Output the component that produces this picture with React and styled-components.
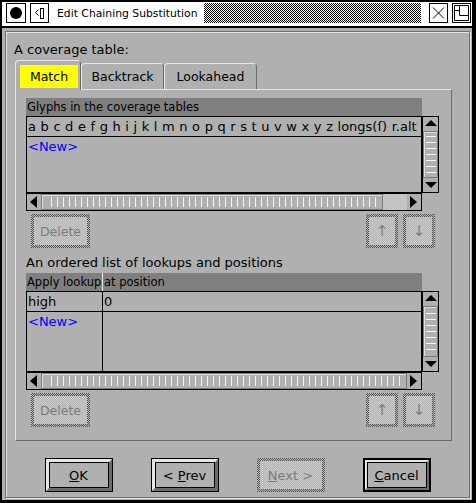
import React from 'react';
import styled, { createGlobalStyle, css } from 'styled-components';

const GRAY = '#b0b0b0';

const GlobalStyle = createGlobalStyle`
  html, body {
    margin: 0;
    padding: 0;
    background: ${GRAY};
  }
  body {
    font-family: "DejaVu Sans", sans-serif;
    font-size: 13px;
    color: #000;
  }
  * {
    box-sizing: border-box;
  }
`;

const stipple = (a, b) => css`
  background: repeating-conic-gradient(${a} 0 25%, ${b} 0 50%) 0 0 / 2px 2px;
`;

const Window = styled.div`
  width: 476px;
  height: 503px;
  display: flex;
  flex-direction: column;
  background: ${GRAY};
  border-style: solid;
  border-color: #000;
  border-width: 2px 4px 3px 2px;
`;

const TitleBar = styled.div`
  height: 26px;
  flex: none;
  display: flex;
  align-items: center;
  padding: 0 1px 2px 2px;
  background: #fff;
  border-bottom: 2px solid #000;
`;

const TitleButton = styled.div`
  width: ${(p) => p.$w || 20}px;
  height: 20px;
  flex: none;
  border: 1px solid #000;
  display: flex;
  align-items: center;
  justify-content: center;
  margin-left: ${(p) => p.$gap || 0}px;
`;

const TitleText = styled.div`
  margin-left: 8px;
  font-size: 10.8px;
  white-space: nowrap;
`;

const Checker = styled.div`
  flex: 1;
  height: 20px;
  margin: 0 8px 0 7px;
  ${stipple('#000', '#fff')}
`;

const Body = styled.div`
  flex: 1;
  display: flex;
  padding: 3px 2px 2px 3px;
`;

const Frame = styled.div`
  flex: 1;
  display: flex;
  flex-direction: column;
  padding: 10px 8px 0 8px;
  border: 1px solid #6e6e6e;
  box-shadow: inset 1px 1px 0 #e4e4e4, 1px 1px 0 #e4e4e4;
`;

const Label = styled.div`
  line-height: 15px;
  white-space: nowrap;
`;

const TabStrip = styled.div`
  display: flex;
  align-items: flex-end;
  margin: 3px 0 0 1px;
  height: 29px;
  font-size: 12.5px;
`;

const Tab = styled.div`
  position: relative;
  height: ${(p) => (p.$active ? 30 : 26)}px;
  margin-bottom: ${(p) => (p.$active ? -1 : 0)}px;
  width: ${(p) => p.$w}px;
  padding: ${(p) => (p.$active ? '4px 2px 2px 4px' : '0')};
  border-top: 1px solid #e8e8e8;
  border-left: 1px solid #e8e8e8;
  border-right: 1px solid #6a6a6a;
  border-radius: 4px 4px 0 0;
  background: ${GRAY};
  z-index: ${(p) => (p.$active ? 1 : 0)};
  display: flex;
  align-items: center;
  justify-content: center;
`;

const TabFace = styled.div`
  flex: 1;
  align-self: stretch;
  display: flex;
  align-items: center;
  justify-content: center;
  background: ${(p) => (p.$active ? '#ffff00' : 'transparent')};
`;

const Panel = styled.div`
  width: 437px;
  margin-left: 1px;
  padding: 8px 12px 13px 10px;
  border-style: solid;
  border-width: 1px;
  border-color: #e8e8e8 #6a6a6a #6a6a6a #e8e8e8;
  display: flex;
  flex-direction: column;
`;

const List = styled.div`
  display: grid;
  grid-template-columns: 396px 17px;
  grid-template-rows: 18px ${(p) => p.$body}px 18px;
`;

const Header = styled.div`
  grid-column: 1;
  grid-row: 1;
  background: #7f7f7f;
  display: flex;
  align-items: center;
  font-size: 11.5px;
`;

const HeadCell = styled.div`
  width: ${(p) => (p.$w ? `${p.$w}px` : 'auto')};
  flex: ${(p) => (p.$w ? 'none' : 1)};
  align-self: stretch;
  display: flex;
  align-items: center;
  padding-left: 1px;
  white-space: nowrap;
  overflow: hidden;
  border-right: ${(p) => (p.$w ? '1px solid #e8e8e8' : 'none')};
`;

const ListBody = styled.div`
  grid-column: 1;
  grid-row: 2;
  border: 1px solid #000;
  overflow: hidden;
  display: grid;
  grid-template-columns: ${(p) => p.$cols || '1fr'};
  grid-template-rows: 20px 1fr;
`;

const Cell = styled.div`
  padding: 1px 0 0 1px;
  white-space: nowrap;
  color: ${(p) => (p.$new ? '#0000ff' : '#000')};
  border-bottom: ${(p) => (p.$top ? '1px solid #000' : 'none')};
  border-right: ${(p) => (p.$sep ? '1px solid #000' : 'none')};
  line-height: 17px;
  word-spacing: ${(p) => p.$ws || 0}px;
`;

const VScroll = styled.div`
  grid-column: 2;
  grid-row: 2;
  border: 1px solid #000;
  display: flex;
  flex-direction: column;
`;

const HScroll = styled.div`
  grid-column: 1;
  grid-row: 3;
  border: 1px solid #000;
  display: flex;
`;

const ArrowBtn = styled.div`
  flex: none;
  ${(p) => (p.$vertical ? 'height: 14px;' : 'width: 14px;')}
  display: flex;
  align-items: center;
  justify-content: center;
  background: ${GRAY};
`;

const VThumb = styled.div`
  flex: 1;
  border: 1px solid #7a7a7a;
  box-shadow: inset 1px 1px 0 #e0e0e0;
  display: flex;
  align-items: center;
  justify-content: center;
`;

const VGrip = styled.div`
  width: 10px;
  height: 37px;
  background: repeating-linear-gradient(to bottom, #f4f4f4 0 1px, transparent 1px 6px);
`;

const HThumb = styled.div`
  flex: 1;
  border: 1px solid #7a7a7a;
  box-shadow: inset 1px 1px 0 #e0e0e0;
  padding: 2px 4px 2px 4px;
  background-clip: content-box;
  background-origin: content-box;
  background-image: repeating-linear-gradient(to right, transparent 0 5px, #f4f4f4 5px 6px);
`;

const Trough = styled.div`
  flex: none;
  background: #c4c4c4;
`;

const ButtonRow = styled.div`
  display: flex;
  align-items: center;
  margin-top: 3px;
  padding: 0 4px 0 5px;
  gap: 5px;
`;

const Spacer = styled.div`
  flex: 1;
`;

const DisabledButton = styled.div`
  width: ${(p) => p.$w}px;
  height: 34px;
  padding: 3px;
  ${stipple('#505050', '#bcbcbc')}
  display: flex;
`;

const DisabledFace = styled.div`
  flex: 1;
  display: flex;
  align-items: center;
  justify-content: center;
  ${stipple('#c8c8c8', '#b6b6b6')}
  color: #7c7c7c;
  font-size: ${(p) => p.$size || 12.5}px;
  white-space: nowrap;
`;

const Section = styled.div`
  margin-top: ${(p) => p.$mt || 0}px;
`;

const Footer = styled.div`
  display: flex;
  justify-content: center;
  gap: 38px;
  margin-top: 17px;
`;

const PushButton = styled.div`
  width: 68px;
  height: 34px;
  border: ${(p) => (p.$default ? 2 : 1)}px solid #000;
  display: flex;
`;

const Bevel = styled.div`
  flex: 1;
  display: flex;
  border-style: solid;
  border-width: ${(p) => (p.$default ? 2 : 3)}px;
  border-color: #e6e6e6 #6c6c6c #6c6c6c #e6e6e6;
`;

const Face = styled.div`
  flex: 1;
  border: 1px solid #000;
  display: flex;
  align-items: center;
  justify-content: center;
  white-space: nowrap;
`;

const Tri = ({ dir }) => {
  const pts = {
    up: '1,9 7,3 13,9',
    down: '1,4 7,10 13,4',
    left: '10,1 3,7 10,13',
    right: '3,1 10,7 3,13',
  }[dir];
  return (
    <svg width="14" height="14" viewBox="0 0 14 14">
      <polygon points={pts} fill="#000" />
    </svg>
  );
};

const ScrollV = () => (
  <VScroll>
    <ArrowBtn $vertical>
      <Tri dir="up" />
    </ArrowBtn>
    <VThumb>
      <VGrip />
    </VThumb>
    <ArrowBtn $vertical>
      <Tri dir="down" />
    </ArrowBtn>
  </VScroll>
);

const ScrollH = ({ trough }) => (
  <HScroll>
    <ArrowBtn>
      <Tri dir="left" />
    </ArrowBtn>
    <HThumb />
    {trough ? <Trough style={{ width: trough }} /> : null}
    <ArrowBtn>
      <Tri dir="right" />
    </ArrowBtn>
  </HScroll>
);

const EditRow = () => (
  <ButtonRow>
    <DisabledButton $w={59}>
      <DisabledFace>Delete</DisabledFace>
    </DisabledButton>
    <Spacer />
    <DisabledButton $w={32}>
      <DisabledFace $size={15}>↑</DisabledFace>
    </DisabledButton>
    <DisabledButton $w={32}>
      <DisabledFace $size={15}>↓</DisabledFace>
    </DisabledButton>
  </ButtonRow>
);

const glyphs = 'a b c d e f g h i j k l m n o p q r s t u v w x y z longs(ſ) r.alt';

export default function App() {
  return (
    <>
      <GlobalStyle />
      <Window>
        <TitleBar>
          <TitleButton $gap={2}>
            <svg width="14" height="14" viewBox="0 0 14 14">
              <circle cx="7" cy="7" r="6" fill="#000" />
            </svg>
          </TitleButton>
          <TitleButton $w={19} $gap={4}>
            <svg width="17" height="18" viewBox="0 0 17 18">
              <path d="M7.5 5.5 L4.5 8.5 L7.5 11.5" fill="none" stroke="#000" strokeWidth="1" />
              <rect x="9.5" y="4.5" width="3" height="10" fill="none" stroke="#000" strokeWidth="1" />
            </svg>
          </TitleButton>
          <TitleText>Edit Chaining Substitution</TitleText>
          <Checker />
          <TitleButton $w={19}>
            <svg width="17" height="18" viewBox="0 0 17 18">
              <path d="M3 3.5 L14 14.5 M14 3.5 L3 14.5" stroke="#000" strokeWidth="1" />
            </svg>
          </TitleButton>
          <TitleButton $w={19} $gap={4}>
            <svg width="17" height="18" viewBox="0 0 17 18">
              <path d="M1.5 1.5 H15.5 V16.5 H1.5 Z M6.5 1.5 V11.5 H15.5 M1.5 6.5 H6.5" fill="none" stroke="#000" strokeWidth="1" />
            </svg>
          </TitleButton>
        </TitleBar>
        <Body>
          <Frame>
            <Label>A coverage table:</Label>
            <TabStrip>
              <Tab $active $w={66}>
                <TabFace $active>Match</TabFace>
              </Tab>
              <Tab $w={83}>
                <TabFace>Backtrack</TabFace>
              </Tab>
              <Tab $w={93}>
                <TabFace>Lookahead</TabFace>
              </Tab>
            </TabStrip>
            <Panel>
              <List $body={77}>
                <Header>
                  <HeadCell>Glyphs in the coverage tables</HeadCell>
                </Header>
                <ListBody>
                  <Cell $top $ws={0.45}>{glyphs}</Cell>
                  <Cell $new>&lt;New&gt;</Cell>
                </ListBody>
                <ScrollV />
                <ScrollH trough={24} />
              </List>
              <EditRow />
              <Section $mt={7}>
                <Label>An ordered list of lookups and positions</Label>
              </Section>
              <Section $mt={3}>
                <List $body={81}>
                  <Header>
                    <HeadCell $w={77}>Apply lookup</HeadCell>
                    <HeadCell>at position</HeadCell>
                  </Header>
                  <ListBody $cols="76px 1fr">
                    <Cell $top $sep>high</Cell>
                    <Cell $top>0</Cell>
                    <Cell $sep $new>&lt;New&gt;</Cell>
                    <Cell />
                  </ListBody>
                  <ScrollV />
                  <ScrollH />
                </List>
              </Section>
              <EditRow />
            </Panel>
            <Footer>
              <PushButton>
                <Bevel>
                  <Face>
                    <u>O</u>K
                  </Face>
                </Bevel>
              </PushButton>
              <PushButton>
                <Bevel>
                  <Face>
                    &lt;&nbsp;<u>P</u>rev
                  </Face>
                </Bevel>
              </PushButton>
              <DisabledButton $w={68}>
                <DisabledFace $size={13}>
                  <u>N</u>ext &gt;
                </DisabledFace>
              </DisabledButton>
              <PushButton $default>
                <Bevel $default>
                  <Face>
                    <u>C</u>ancel
                  </Face>
                </Bevel>
              </PushButton>
            </Footer>
          </Frame>
        </Body>
      </Window>
    </>
  );
}
